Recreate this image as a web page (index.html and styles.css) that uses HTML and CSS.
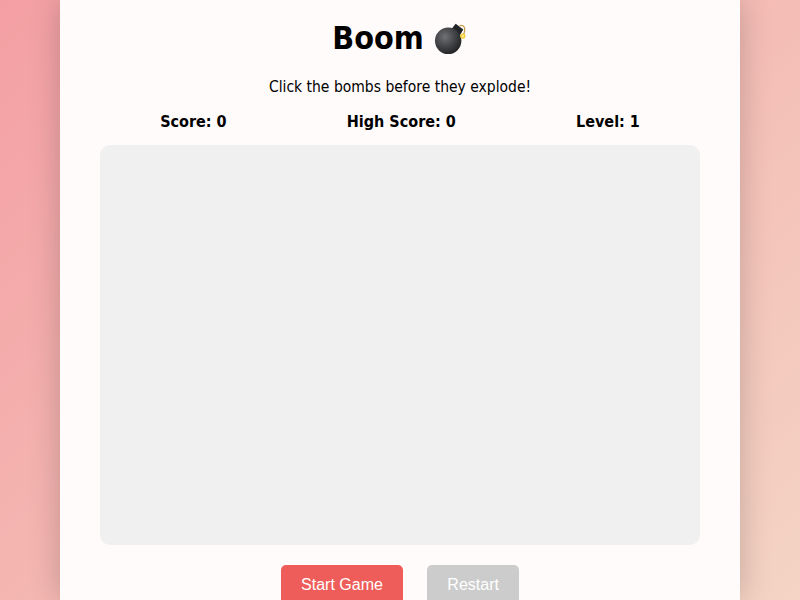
FILE: index.html
```html
<!DOCTYPE html>
<html lang="en">
<head>
<meta charset="utf-8">
<title>Boom</title>
<link rel="stylesheet" href="styles.css">
</head>
<body>
<main class="container">
  <h1 class="title">Boom
    <svg class="bomb" viewBox="0 0 36 36" aria-hidden="true">
      <defs>
        <radialGradient id="ball" cx="0.38" cy="0.35" r="0.75">
          <stop offset="0" stop-color="#6f7174"/>
          <stop offset="0.5" stop-color="#424447"/>
          <stop offset="1" stop-color="#1b1c1e"/>
        </radialGradient>
      </defs>
      <path d="M23 3 L31 9 L27 16 L18 9 Z" fill="#232427"/>
      <circle cx="15" cy="21" r="14" fill="url(#ball)"/>
      <path d="M27 5 C30 4 32 5 32.5 8 C32.8 10 32.4 12 31.5 14" fill="none" stroke="#c49a45" stroke-width="1.3"/>
      <circle cx="30.5" cy="16" r="2.8" fill="#f5cf35"/>
      <circle cx="30.5" cy="16" r="1.2" fill="#fff3a0"/>
    </svg>
  </h1>
  <p class="tagline">Click the bombs before they explode!</p>
  <div class="stats">
    <span>Score: 0</span>
    <span>High Score: 0</span>
    <span>Level: 1</span>
  </div>
  <div class="board"></div>
  <div class="controls">
    <button class="btn btn-start">Start Game</button>
    <button class="btn btn-restart">Restart</button>
  </div>
</main>
</body>
</html>
```
FILE: styles.css
```css
html, body {
  margin: 0;
  height: 100%;
}
body {
  height: 600px;
  overflow: hidden;
  background: linear-gradient(135deg, #f49fa3 0%, #f4d4c4 100%);
  font-family: "DejaVu Sans Condensed", "DejaVu Sans", sans-serif;
  color: #000;
}
.container {
  box-sizing: border-box;
  width: 680px;
  height: 600px;
  overflow: hidden;
  margin: 0 auto;
  padding: 0 40px;
  background: #fffbfa;
  box-shadow: 0 0 30px rgba(0, 0, 0, 0.2);
  text-align: center;
}
.title {
  margin: 0;
  padding-top: 17px;
  font-size: 32px;
  line-height: 42px;
  font-weight: 700;
  display: flex;
  justify-content: center;
  align-items: center;
  gap: 10px;
}
.bomb {
  width: 34px;
  height: 34px;
}
.tagline {
  margin: 18px 0 0;
  font-size: 15.5px;
  line-height: 20px;
}
.stats {
  display: flex;
  justify-content: space-around;
  margin-top: 15px;
  font-size: 16px;
  line-height: 20px;
  font-weight: 700;
}
.board {
  height: 400px;
  margin-top: 13px;
  background: #f0f0f0;
  border-radius: 10px;
}
.controls {
  display: flex;
  justify-content: center;
  gap: 24.5px;
  margin-top: 20px;
}
.btn {
  height: 40px;
  padding: 0 20px;
  border: 0;
  border-radius: 5px;
  color: #fff;
  font-family: "Liberation Sans", Arial, sans-serif;
  font-size: 16px;
}
.btn-start {
  background: #ee5d59;
}
.btn-restart {
  background: #cccccc;
}
```
